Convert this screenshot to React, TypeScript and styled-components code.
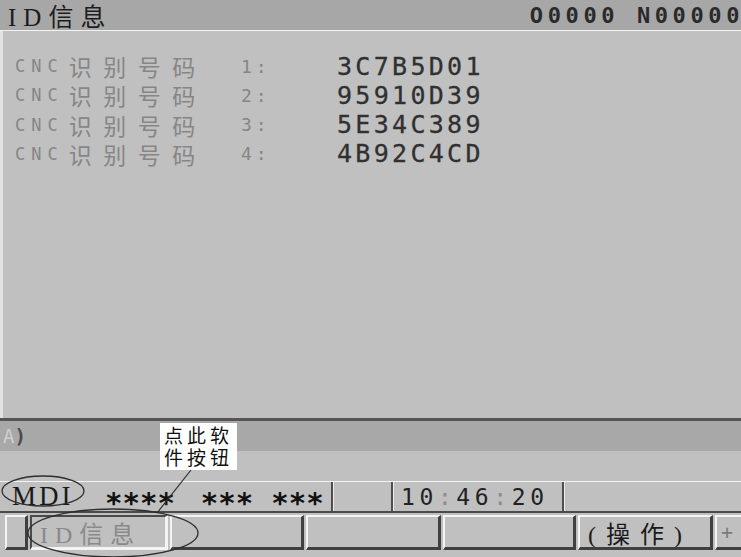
import * as React from 'react';
import styled, { createGlobalStyle } from 'styled-components';

const GlobalStyle = createGlobalStyle`
  html, body {
    margin: 0;
    padding: 0;
    background: #c0c0c0;
  }
  body {
    width: 741px;
    height: 557px;
    overflow: hidden;
  }
`;

const MONO = `"DejaVu Sans Mono", "Liberation Mono", monospace`;
const CJK = `"Noto Sans CJK SC", sans-serif`;
const SERIF_CJK = `"Liberation Serif", "Noto Sans CJK SC", serif`;

const Screen = styled.div`
  position: relative;
  width: 741px;
  height: 557px;
  display: flex;
  flex-direction: column;
  background: #c0c0c0;
  overflow: hidden;
`;

const TitleBar = styled.div`
  height: 30px;
  flex: none;
  display: flex;
  align-items: center;
  justify-content: space-between;
  padding-left: 8px;
  background: #a7a7a7;
  border-bottom: 1px solid #f2f2f2;
`;

const Title = styled.div`
  font-family: ${SERIF_CJK};
  font-size: 25px;
  letter-spacing: 7px;
  color: #1c1c1c;
  white-space: nowrap;
`;

const ProgramNo = styled.div`
  font-family: ${MONO};
  font-weight: bold;
  font-size: 22px;
  letter-spacing: 4.6px;
  margin-right: -3px;
  color: #2a2a2a;
  white-space: nowrap;
`;

const Body = styled.div`
  height: 387px;
  flex: none;
  border-left: 3px solid #e2e2e2;
  padding-top: 18px;
  box-sizing: border-box;
`;

const IdRow = styled.div`
  display: grid;
  grid-template-columns: 226px 96px 1fr;
  align-items: center;
  height: 29.3px;
  padding-left: 12px;
`;

const Label = styled.div`
  display: flex;
  align-items: center;
  white-space: nowrap;
  color: #868686;
`;

const LabelLatin = styled.span`
  font-family: ${MONO};
  font-size: 17px;
  letter-spacing: 6px;
`;

const LabelCjk = styled.span`
  font-family: ${CJK};
  font-size: 23px;
  letter-spacing: 11.5px;
  margin-left: 5px;
`;

const LabelNo = styled.span`
  font-family: ${MONO};
  font-size: 18px;
  letter-spacing: 4px;
  color: #868686;
`;

const Value = styled.span`
  font-family: ${MONO};
  font-size: 25px;
  letter-spacing: 3.3px;
  color: #303030;
  -webkit-text-stroke: 0.3px #303030;
`;

const Divider = styled.div`
  height: 3px;
  flex: none;
  background: #555555;
`;

const InputLine = styled.div`
  height: 30px;
  flex: none;
  display: flex;
  align-items: center;
  padding-left: 3px;
  background: #a8a8a8;
  font-family: ${MONO};
  font-size: 19px;
`;

const Prompt = styled.span<{ $tone: 'light' | 'dark' }>`
  color: ${({ $tone }) => ($tone === 'light' ? '#cfcfcf' : '#4a4a4a')};
  font-weight: ${({ $tone }) => ($tone === 'light' ? 'normal' : 'bold')};
`;

const Band = styled.div`
  height: 30px;
  flex: none;
  background: #c0c0c0;
`;

const StatusRow = styled.div`
  height: 29px;
  flex: none;
  display: flex;
  border-top: 1px solid #f4f4f4;
  border-bottom: 2px solid #4a4a4a;
`;

const StatusCell = styled.div<{ $width?: number }>`
  ${({ $width }) => ($width ? `width: ${$width}px; flex: none;` : 'flex: 1;')}
  display: flex;
  align-items: center;
  box-sizing: border-box;
  border-left: 1px solid #ececec;
  border-right: 2px solid #4e4e4e;
  &:first-child {
    border-left: none;
  }
  &:last-child {
    border-right: none;
  }
`;

const Mode = styled.span`
  width: 95px;
  flex: none;
  box-sizing: border-box;
  padding-left: 12px;
  font-family: ${SERIF_CJK};
  font-size: 27px;
  letter-spacing: 3px;
  color: #1a1a1a;
  line-height: 1;
`;

const Stars = styled.span<{ $left: number }>`
  position: relative;
  top: 7px;
  font-family: ${MONO};
  font-weight: bold;
  font-size: 29px;
  letter-spacing: 0px;
  color: #111111;
  margin-left: ${({ $left }) => $left}px;
  line-height: 1;
`;

const Clock = styled.span`
  font-family: ${MONO};
  font-size: 23px;
  letter-spacing: 4.6px;
  color: #222222;
  margin-left: 7px;
`;

const Colon = styled.span`
  color: #8c8c8c;
`;

const Gap = styled.div`
  height: 2px;
  flex: none;
`;

const SoftkeyRow = styled.div`
  height: 35px;
  flex: none;
  display: flex;
  gap: 2px;
  padding-left: 5px;
`;

const Softkey = styled.div<{ $width: number; $pressed?: boolean }>`
  width: ${({ $width }) => $width}px;
  flex: none;
  box-sizing: border-box;
  display: flex;
  align-items: center;
  background: #c0c0c0;
  border-style: solid;
  border-width: 2px 3px 3px 2px;
  border-color: ${({ $pressed }) =>
    $pressed ? '#4a4a4a #f4f4f4 #f4f4f4 #4a4a4a' : '#f4f4f4 #404040 #404040 #f4f4f4'};
  color: ${({ $pressed }) => ($pressed ? '#8a8a8a' : '#1a1a1a')};
  white-space: nowrap;
  overflow: hidden;
`;

const KeyText = styled.span<{ $pad: number; $spacing: number }>`
  font-family: ${SERIF_CJK};
  font-size: 24px;
  letter-spacing: ${({ $spacing }) => $spacing}px;
  padding-left: ${({ $pad }) => $pad}px;
`;

const KeyPlus = styled.span`
  font-family: ${MONO};
  font-size: 20px;
  color: #7a7a7a;
  padding-left: 4px;
`;

const Callout = styled.div`
  position: absolute;
  left: 160px;
  top: 423px;
  width: 77px;
  height: 47px;
  box-sizing: border-box;
  padding: 1px 0 0 4px;
  background: #ffffff;
  font-family: ${CJK};
  font-size: 19px;
  line-height: 22px;
  letter-spacing: 4px;
  color: #111111;
`;

const Overlay = styled.svg`
  position: absolute;
  left: 0;
  top: 0;
  pointer-events: none;
`;

const ids = [
  { no: 1, value: '3C7B5D01' },
  { no: 2, value: '95910D39' },
  { no: 3, value: '5E34C389' },
  { no: 4, value: '4B92C4CD' },
];

export default function App() {
  return (
    <Screen>
      <GlobalStyle />
      <TitleBar>
        <Title>ID信息</Title>
        <ProgramNo>O0000 N00000</ProgramNo>
      </TitleBar>

      <Body>
        {ids.map((row) => (
          <IdRow key={row.no}>
            <Label>
              <LabelLatin>CNC</LabelLatin>
              <LabelCjk>识别号码</LabelCjk>
            </Label>
            <LabelNo>{row.no}:</LabelNo>
            <Value>{row.value}</Value>
          </IdRow>
        ))}
      </Body>

      <Divider />
      <InputLine>
        <Prompt $tone="light">A</Prompt>
        <Prompt $tone="dark">)</Prompt>
      </InputLine>
      <Band />

      <StatusRow>
        <StatusCell $width={333}>
          <Mode>MDI</Mode>
          <Stars $left={10}>****</Stars>
          <Stars $left={26}>***</Stars>
          <Stars $left={18}>***</Stars>
        </StatusCell>
        <StatusCell $width={60} />
        <StatusCell $width={171}>
          <Clock>
            10<Colon>:</Colon>46<Colon>:</Colon>20
          </Clock>
        </StatusCell>
        <StatusCell />
      </StatusRow>

      <Gap />

      <SoftkeyRow>
        <Softkey $width={23} />
        <Softkey $width={138} $pressed>
          <KeyText $pad={8} $spacing={7}>ID信息</KeyText>
        </Softkey>
        <Softkey $width={134} />
        <Softkey $width={135} />
        <Softkey $width={133} />
        <Softkey $width={135}>
          <KeyText $pad={8} $spacing={10}>(操作)</KeyText>
        </Softkey>
        <Softkey $width={40}>
          <KeyPlus>+</KeyPlus>
        </Softkey>
      </SoftkeyRow>

      <Callout>
        点此软
        <br />
        件按钮
      </Callout>

      <Overlay width={741} height={557} viewBox="0 0 741 557">
        <ellipse cx={43} cy={491} rx={41} ry={15} fill="none" stroke="#2e2e2e" strokeWidth={1.3} />
        <ellipse cx={113} cy={533} rx={85} ry={24} fill="none" stroke="#2e2e2e" strokeWidth={1.3} />
        <line x1={191} y1={470} x2={157} y2={513} stroke="#2e2e2e" strokeWidth={1.2} />
      </Overlay>
    </Screen>
  );
}
